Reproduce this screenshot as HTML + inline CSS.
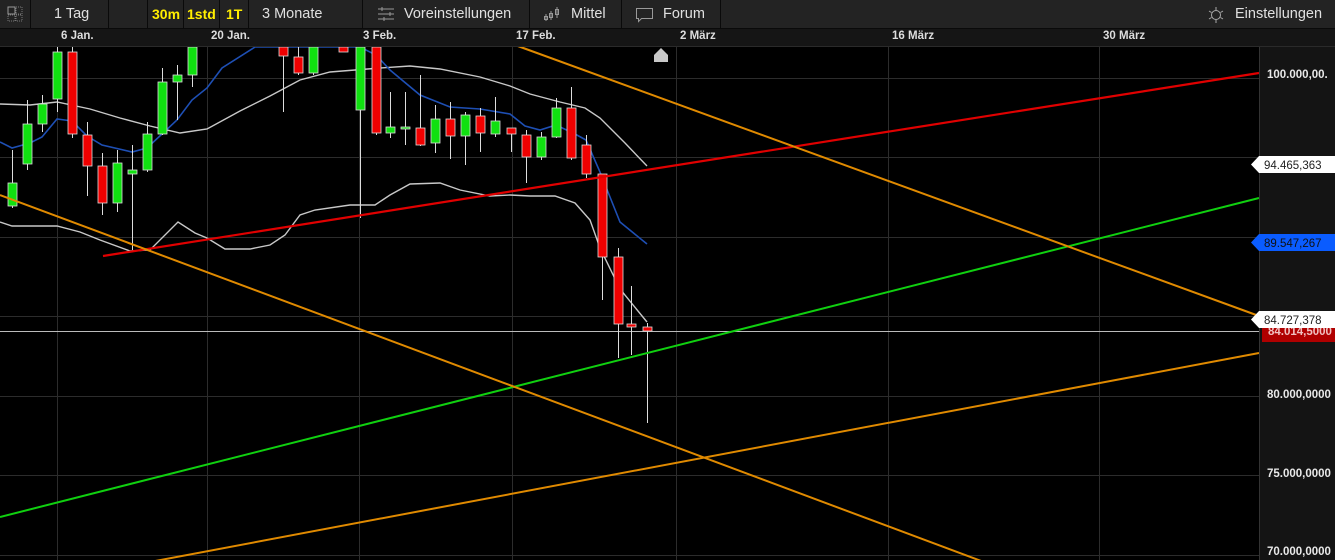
<!DOCTYPE html>
<html><head><meta charset="utf-8"><style>
body{margin:0;width:1335px;height:560px;background:#000;overflow:hidden;font-family:"Liberation Sans",sans-serif;position:relative}
.tb{position:absolute;left:0;top:0;width:1335px;height:28px;background:#232323;border-bottom:1px solid #0a0a0a}
.sep{position:absolute;top:0;width:1px;height:28px;background:#0a0a0a}
.t{position:absolute;top:0;color:#e0e0e0;font-size:14.5px;line-height:29px;white-space:nowrap}
.y{color:#ffee00;font-weight:bold;font-size:14px}
.dr{position:absolute;left:0;top:29px;width:1335px;height:17px;background:#151515;border-bottom:1px solid #2a2a2a}
.d{position:absolute;top:30px;color:#ddd;font-size:11.5px;font-weight:bold}
.ax{position:absolute;left:1259px;top:47px;width:76px;height:513px;background:#141414;border-left:1px solid #333}
.p{position:absolute;left:1267px;color:#e8e8e8;font-size:11.5px;font-weight:bold}
.lb{position:absolute;left:1262px;height:17px;width:80px;font-size:11.5px;line-height:17px;padding-left:6px;box-sizing:border-box}
</style></head><body>
<svg width="1335" height="560" style="position:absolute;left:0;top:0">
<g stroke="#2c2c2c" stroke-width="1">
<line x1="0" y1="78.5" x2="1259" y2="78.5"/><line x1="0" y1="157.5" x2="1259" y2="157.5"/><line x1="0" y1="237.5" x2="1259" y2="237.5"/><line x1="0" y1="316.5" x2="1259" y2="316.5"/><line x1="0" y1="396.5" x2="1259" y2="396.5"/><line x1="0" y1="475.5" x2="1259" y2="475.5"/><line x1="0" y1="555.5" x2="1259" y2="555.5"/>
<line x1="57.5" y1="29" x2="57.5" y2="560"/><line x1="207.5" y1="29" x2="207.5" y2="560"/><line x1="359.5" y1="29" x2="359.5" y2="560"/><line x1="512.5" y1="29" x2="512.5" y2="560"/><line x1="676.5" y1="29" x2="676.5" y2="560"/><line x1="888.5" y1="29" x2="888.5" y2="560"/><line x1="1099.5" y1="29" x2="1099.5" y2="560"/>
</g>
<line x1="0" y1="331.5" x2="1259" y2="331.5" stroke="#bbb" stroke-width="1"/>
<polyline fill="none" stroke="#c8c8c8" stroke-width="1.4" points="0,104 30,105 57,102 90,109 120,118 150,126 180,133 207,129 240,111 270,96 300,80 330,72 355,70 380,68 410,66 440,69 480,77 510,86 530,94 560,102 585,108 600,118 625,143 647,166"/>
<polyline fill="none" stroke="#c8c8c8" stroke-width="1.4" points="0,222 12,226 57,226 80,232 100,240 130,251 150,250 178,222 195,233 207,238 225,249 250,249 270,245 285,235 300,215 315,210 350,205 375,205 390,195 410,184 440,183 460,190 490,196 510,195 530,196 555,196 575,203 590,220 600,248 620,289 647,322"/>
<polyline fill="none" stroke="#1e4fb4" stroke-width="1.6" points="0,142 12,148 30,143 42,137 57,119 72,121 87,136 102,145 132,152 147,148 162,134 177,120 192,100 207,88 222,68 255,47 360,47 376,55 390,70 420,95 450,107 480,109 510,114 525,126 540,130 556,125 575,134 586,140 600,172 620,222 647,244"/>
<g id="c" stroke="#ddd" stroke-width="1"></g>
<line x1="103" y1="256" x2="1259" y2="73" stroke="#e00000" stroke-width="2.2"/>
<line x1="0" y1="517" x2="1259" y2="198" stroke="#10d010" stroke-width="2"/>
<line x1="515" y1="45" x2="1259" y2="316" stroke="#e08a00" stroke-width="2"/>
<line x1="0" y1="195" x2="1000" y2="568" stroke="#e08a00" stroke-width="2"/>
<line x1="150" y1="562" x2="1259" y2="353" stroke="#e08a00" stroke-width="2"/>
<polygon points="654,62 654,55 661,48 668,55 668,62" fill="#c8c8c8"/>
</svg>
<div class="tb">
<svg style="position:absolute;left:0;top:0" width="30" height="28"><rect x="8" y="7" width="7" height="7" fill="none" stroke="#999"/><rect x="16" y="7" width="6" height="7" fill="none" stroke="#777" stroke-dasharray="1,1"/><rect x="8" y="15" width="7" height="6" fill="none" stroke="#777" stroke-dasharray="1,1"/><rect x="16" y="15" width="6" height="6" fill="none" stroke="#777" stroke-dasharray="1,1"/></svg>
<div class="sep" style="left:30px"></div>
<div class="t" style="left:54px">1 Tag</div>
<div class="sep" style="left:108px"></div>
<div class="t y" style="left:152px">30m</div>
<div class="sep" style="left:147px"></div>
<div class="t y" style="left:187px">1std</div>
<div class="sep" style="left:183px"></div>
<div class="t y" style="left:226px">1T</div>
<div class="sep" style="left:219px"></div>
<div class="sep" style="left:248px"></div>
<div class="t" style="left:262px">3 Monate</div>
<div class="sep" style="left:362px"></div>
<div class="t" style="left:404px">Voreinstellungen</div>
<svg style="position:absolute;left:376px;top:7px" width="20" height="15" stroke="#999" fill="none"><line x1="2" y1="2" x2="18" y2="2"/><line x1="2" y1="7" x2="18" y2="7"/><line x1="2" y1="12" x2="18" y2="12"/><line x1="6" y1="0" x2="6" y2="4"/><line x1="14" y1="5" x2="14" y2="9"/><line x1="8" y1="10" x2="8" y2="14"/></svg>
<div class="sep" style="left:529px"></div>
<div class="t" style="left:571px">Mittel</div>
<svg style="position:absolute;left:543px;top:6px" width="20" height="17" stroke="#999" fill="none"><line x1="3" y1="8" x2="3" y2="15"/><rect x="1.5" y="10.5" width="3" height="3"/><line x1="8" y1="5" x2="8" y2="14"/><rect x="6.5" y="7.5" width="3" height="4"/><line x1="14" y1="1" x2="14" y2="12"/><rect x="12.5" y="3.5" width="3" height="5"/></svg>
<div class="sep" style="left:621px"></div>
<div class="t" style="left:663px">Forum</div>
<svg style="position:absolute;left:635px;top:7px" width="20" height="16" stroke="#999" fill="none"><path d="M1.5 1.5h16v10h-11l-3 3v-3h-2z"/></svg>
<div class="sep" style="left:720px"></div>
<div class="t" style="left:1235px">Einstellungen</div>
<svg style="position:absolute;left:1207px;top:6px" width="18" height="18" stroke="#aaa" fill="none"><circle cx="9" cy="9" r="4.5"/><line x1="9" y1="1" x2="9" y2="4"/><line x1="9" y1="14" x2="9" y2="17"/><line x1="2" y1="5" x2="4.5" y2="6.5"/><line x1="16" y1="5" x2="13.5" y2="6.5"/><line x1="2" y1="13" x2="4.5" y2="11.5"/><line x1="16" y1="13" x2="13.5" y2="11.5"/></svg>
</div>
<div class="dr"></div>
<div class="d" style="left:61px">6 Jan.</div><div class="d" style="left:211px">20 Jan.</div><div class="d" style="left:363px">3 Feb.</div><div class="d" style="left:516px">17 Feb.</div><div class="d" style="left:680px">2 März</div><div class="d" style="left:892px">16 März</div><div class="d" style="left:1103px">30 März</div>
<div class="ax"></div>
<div class="p" style="top:69px">100.000,00.</div>
<div class="p" style="top:389px">80.000,0000</div>
<div class="p" style="top:468px">75.000,0000</div>
<div class="p" style="top:546px">70.000,0000</div>
<div class="lb" style="top:324px;background:#b00000;color:#f0c0c0;font-weight:bold;height:18px">84.014,5000</div>
<svg style="position:absolute;left:1251px;top:156px" width="84" height="180">
<polygon points="8,0 84,0 84,17 8,17 0,8.5" fill="#fff"/>
<polygon points="8,78 84,78 84,95 8,95 0,86.5" fill="#0a5cff"/>
<polygon points="8,155 84,155 84,172 8,172 0,163.5" fill="#fff"/>
<text x="13" y="13" font-size="11.5" font-family="Liberation Sans" fill="#222">94.465,363</text>
<text x="13" y="91" font-size="11.5" font-family="Liberation Sans" fill="#111">89.547,267</text>
<text x="13" y="168" font-size="11.5" font-family="Liberation Sans" fill="#222">84.727,378</text>
</svg>
<script>
var C=[[12,183,206,150,208,1],[27,124,164,100,170,1],[42,104,124,95,132,1],[57,52,99,45,112,1],[72,52,134,45,138,0],[87,135,166,122,196,0],[102,166,203,153,215,0],[117,163,203,150,212,1],[132,170,174,145,250,1],[147,134,170,122,172,1],[162,82,134,68,135,1],[177,75,82,65,120,1],[192,47,75,47,87,1],[283,47,56,47,112,0],[298,57,73,47,75,0],[313,47,73,47,75,1],[343,47,52,47,52,0],[360,47,110,47,218,1],[376,47,133,47,135,0],[390,127,133,92,138,1],[405,127,128,92,145,1],[420,128,145,75,146,0],[435,119,143,105,153,1],[450,119,136,102,159,0],[465,115,136,112,165,1],[480,116,133,108,152,0],[495,121,134,97,137,1],[511,128,134,128,152,0],[526,135,157,130,183,0],[541,137,157,132,160,1],[556,108,137,98,138,1],[571,108,158,87,160,0],[586,145,174,135,178,0],[602,174,257,174,300,0],[618,257,324,248,358,0],[631,324,327,286,355,0],[647,327,331,323,423,0]];
var g=document.getElementById('c'),h='';
C.forEach(function(c){h+='<line x1="'+(c[0]+.5)+'" y1="'+c[3]+'" x2="'+(c[0]+.5)+'" y2="'+c[4]+'"/>';h+='<rect x="'+(c[0]-4)+'" y="'+c[1]+'" width="9" height="'+Math.max(2,c[2]-c[1])+'" fill="'+(c[5]?'#10e010':'#f00000')+'" stroke="#ddd" stroke-width="0.8"/>';});
g.innerHTML=h;
</script>
</body></html>
